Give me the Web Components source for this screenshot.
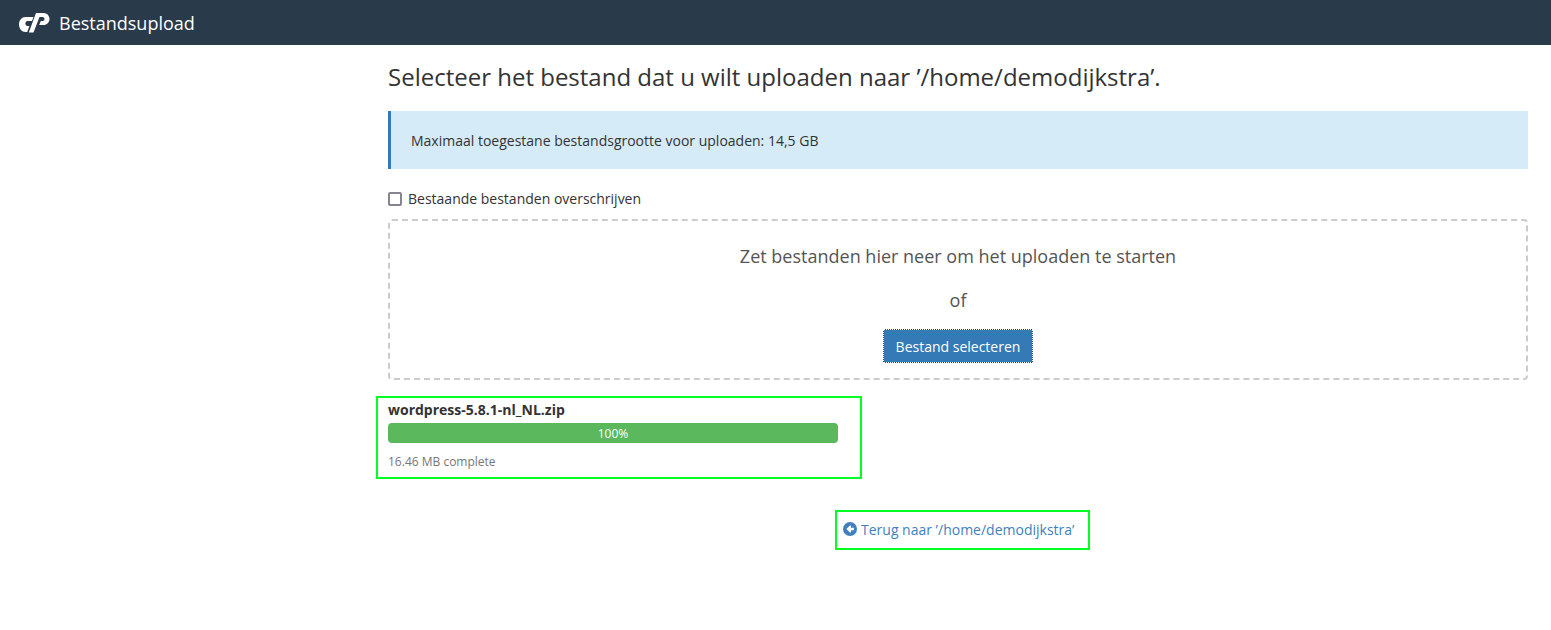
<!DOCTYPE html>
<html lang="nl">
<head>
<meta charset="utf-8">
<title>Bestandsupload</title>
<style>
  html, body { margin: 0; padding: 0; background: #fff; }
  body { font-family: "Open Sans", "Liberation Sans", sans-serif; font-size: 14px; color: #333; }
</style>
</head>
<body>
<top-bar>Bestandsupload</top-bar>
<upload-page></upload-page>

<template id="top-bar-tpl">
  <style>
    :host { display: flex; align-items: center; height: 45px; background: #293a4a; color: #fff; padding-left: 19px; }
    svg { width: 31px; height: 21px; margin-right: 9px; display: block; }
    span { display: block; font-size: 18px; line-height: 25px; padding-top: 2px; }
  </style>
  <svg viewBox="0 0 31 21">
    <path fill="#fff" d="M6.5 5H14.5L13 9H8.5C7.2 9 6.4 10.2 6.4 11.5C6.4 12.9 7.2 14 8.5 14H10.5L8.2 20H6.5C2.8 20 0 16.5 0 12.5C0 8.3 2.8 5 6.5 5Z"/>
    <path fill="#fff" d="M17 1H24.5C28 1 30.5 3.8 30.5 7C30.5 10.3 28 13 24.5 13H20.2L21.8 9H23.5C24.8 9 25.5 8 25.5 7C25.5 6 24.8 5 23.5 5H20.5L14.5 20.5H9.8Z"/>
  </svg>
  <span><slot></slot></span>
</template>

<template id="info-alert-tpl">
  <style>
    :host { display: block; box-sizing: border-box; height: 58px; background: #d6ebf8; border-left: 3px solid #337ab7; padding-left: 20px; font-size: 14px; line-height: 60px; color: #333; }
  </style>
  <slot></slot>
</template>

<template id="overwrite-check-tpl">
  <style>
    :host { display: flex; align-items: center; gap: 6px; height: 20px; font-size: 14px; color: #333; }
    i { box-sizing: border-box; width: 14px; height: 14px; margin-top: 2px; border: 2px solid #858591; border-radius: 2px; background: #fff; display: block; }
  </style>
  <i></i><span><slot></slot></span>
</template>

<template id="drop-zone-tpl">
  <style>
    :host { display: flex; flex-direction: column; align-items: center; box-sizing: border-box; height: 161px; border: 2px dashed #ccc; border-radius: 4px; color: #555; font-size: 18px; }
    p { margin: 0; line-height: 24px; }
    .main { margin-top: 23px; }
    .of { margin-top: 20px; }
    button { margin-top: 17px; box-sizing: border-box; width: 150px; height: 34px; background: #337ab7; color: #fff; border: 1px solid #1f4f7a; outline: 1px dotted #fff; outline-offset: -1px; border-radius: 1px; font: 14px "Open Sans", sans-serif; padding: 0; }
  </style>
  <p class="main"><slot></slot></p>
  <p class="of">of</p>
  <button>Bestand selecteren</button>
</template>

<template id="upload-status-tpl">
  <style>
    :host { display: block; box-sizing: border-box; width: 486px; height: 83px; margin-left: -12px; margin-top: 16px; padding: 2px 10px 0; border: 2px solid #0f2; }
    .name { font-size: 14px; font-weight: 700; line-height: 20px; color: #333; }
    .bar { margin-top: 3px; width: 450px; height: 20px; border-radius: 4px; background: #5cb85c; color: #fff; font-size: 12px; line-height: 21px; text-align: center; }
    .size { margin-top: 10px; font-size: 12px; line-height: 18px; color: #777; }
  </style>
  <div class="name"><slot></slot></div>
  <div class="bar">100%</div>
  <div class="size">16.46 MB complete</div>
</template>

<template id="back-link-tpl">
  <style>
    :host { display: flex; align-items: center; box-sizing: border-box; width: 255px; height: 40px; margin-left: 447px; margin-top: 31px; padding: 0 0 2px 6px; border: 2px solid #0f2; color: #3f7fbf; font-size: 14px; }
    svg { width: 14px; height: 14px; margin-right: 4px; display: block; }
  </style>
  <svg viewBox="0 0 14 14">
    <circle cx="7" cy="7" r="7" fill="#4080c0"/>
    <path fill="#fff" d="M7.2 3.2L3.4 7L7.2 10.8L8 10V8.2H11V5.8H8V4Z"/>
  </svg>
  <span><slot></slot></span>
</template>

<template id="upload-page-tpl">
  <style>
    :host { display: block; width: 1140px; margin-left: 388px; }
    h1 { margin: 0; padding-top: 15px; font-size: 24px; font-weight: 400; line-height: 34px; color: #333; }
    info-alert { margin-top: 17px; }
    overwrite-check { margin-top: 19px; }
    drop-zone { margin-top: 11px; }
  </style>
  <h1>Selecteer het bestand dat u wilt uploaden naar ’/home/demodijkstra’.</h1>
  <info-alert>Maximaal toegestane bestandsgrootte voor uploaden: 14,5 GB</info-alert>
  <overwrite-check>Bestaande bestanden overschrijven</overwrite-check>
  <drop-zone>Zet bestanden hier neer om het uploaden te starten</drop-zone>
  <upload-status>wordpress-5.8.1-nl_NL.zip</upload-status>
  <back-link>Terug naar ’/home/demodijkstra’</back-link>
</template>

<script>
  // elk element kloont zijn eigen template in een open shadow root
  function makeElement(tag){
    customElements.define(tag, class extends HTMLElement {
      constructor(){
        super();
        this.attachShadow({mode: 'open'});
        const tpl = document.getElementById(tag + '-tpl');
        this.shadowRoot.appendChild(tpl.content.cloneNode(true));
      }
    });
  }
  ['top-bar', 'info-alert', 'overwrite-check', 'drop-zone', 'upload-status', 'back-link', 'upload-page'].forEach(makeElement);
</script>
</body>
</html>
